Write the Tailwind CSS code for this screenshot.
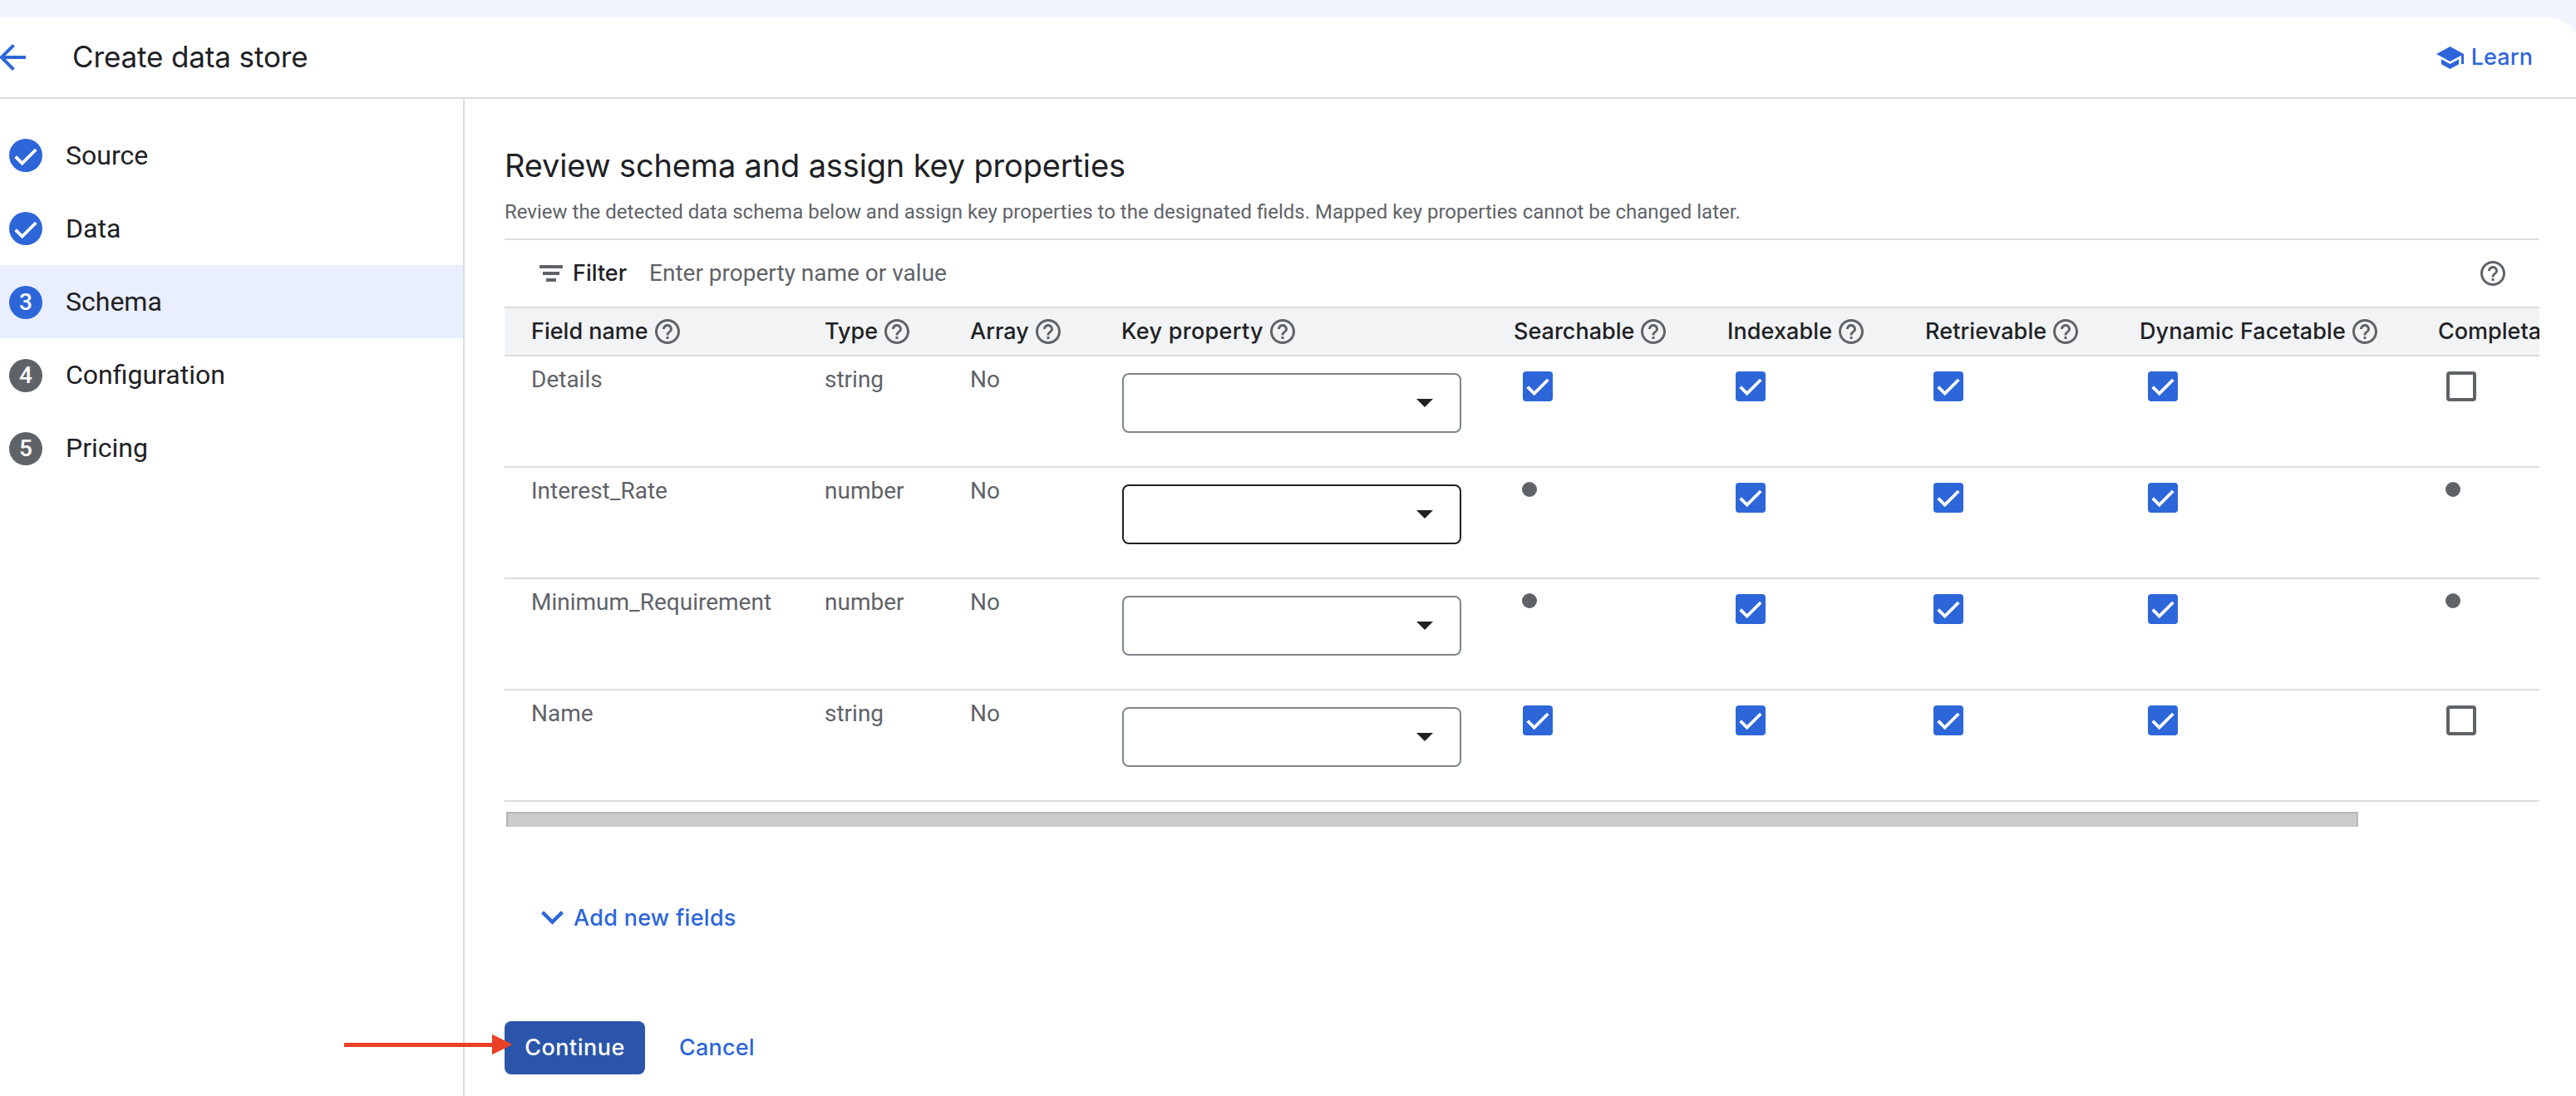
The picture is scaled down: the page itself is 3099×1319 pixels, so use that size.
<!DOCTYPE html>
<html lang="en">
<head>
  <meta charset="UTF-8">
  <meta name="viewport" content="width=device-width, initial-scale=1.0">
  <title>Create data store</title>
  <script src="https://cdn.jsdelivr.net/npm/@tailwindcss/browser@4"></script>
</head>
<body class="bg-[#f0f5fe] pt-[21px] h-[1319px] overflow-hidden font-['Roboto',sans-serif] text-[28px] text-[#5f6368]">
  <!-- Icons -->
  <svg class="hidden">
    <symbol id="help" viewBox="2 2 20 20"><path fill="currentColor" d="M11 18h2v-2h-2v2zm1-16C6.480 2 2 6.480 2 12s4.480 10 10 10 10-4.480 10-10S17.520 2 12 2zm0 18c-4.410 0-8-3.590-8-8s3.590-8 8-8 8 3.590 8 8-3.590 8-8 8zm0-14c-2.210 0-4 1.790-4 4h2c0-1.100.9-2 2-2s2 .9 2 2c0 2-3 1.750-3 5h2c0-2.250 3-2.500 3-5 0-2.210-1.790-4-4-4z"/></symbol>
    <symbol id="check" viewBox="0 0 36 36"><path fill="none" stroke="#fff" stroke-width="3.8" d="M5.700 18.600L13.700 26.600L30.300 10"/></symbol>
  </svg>

  <div class="w-[3104px] h-[1298px] bg-white rounded-tr-[40px]">
    <header class="h-[98px] border-b-2 border-[#dadce0] flex items-center font-['Inter',sans-serif]">
      <svg class="w-8 h-8 -ml-px text-[#2d66d9] shrink-0" viewBox="4 4 16 16"><path fill="currentColor" d="M20 11H7.830l5.590-5.590L12 4l-8 8 8 8 1.410-1.410L7.830 13H20v-2z"/></svg>
      <h1 class="ml-14 pb-0.5 text-[35px] text-[#202124] tracking-[-0.13px]">Create data store</h1>
      <a class="ml-auto mr-[57px] flex items-center text-[#2d66d9]">
        <svg class="w-[33px] h-[27px]" viewBox="1 3 22 18"><path fill="currentColor" d="M5 13.180v4L12 21l7-3.820v-4L12 17l-7-3.820zM12 3L1 9l11 6 9-4.910V17h2V9L12 3z"/></svg>
        <span class="ml-[9px] pt-px text-[27px] font-medium tracking-[0.1px]">Learn</span>
      </a>
    </header>

    <div class="flex h-[1200px]">
      <nav id="steps" class="w-[559px] shrink-0 border-r-2 border-[#dadce0] pt-6 text-[32px] text-[#202124]"></nav>

      <main class="w-[2496px] pl-12 pt-14">
        <h2 class="font-['Inter',sans-serif] text-[38px] leading-12 text-[#202124] tracking-[-0.16px]">Review schema and assign key properties</h2>
        <p class="mt-4 text-2xl leading-8">Review the detected data schema below and assign key properties to the designated fields. Mapped key properties cannot be changed later.</p>

        <div class="mt-4 h-[82px] border-t-2 border-[#dadce0] flex items-center pl-[42px] pr-[41px]">
          <svg class="w-7 h-5" viewBox="0 0 28 20" fill="currentColor"><path d="M0 0h28v4H0zM4 8h20v4H4zM8 16h12v4H8z"/></svg>
          <span class="ml-3 w-[92px] font-['Inter',sans-serif] text-[27px] font-medium text-[#202124]">Filter</span>
          <span>Enter property name or value</span>
          <svg class="w-[30px] h-[30px] ml-auto"><use href="#help"/></svg>
        </div>

        <div class="overflow-hidden">
          <div id="head" class="w-[2700px] h-[60px] grid grid-cols-[352px_175px_182px_473px_256px_238px_258px_359px_1fr] pl-8 border-y-2 border-[#dadce0] bg-[#f1f3f4] font-['Inter',sans-serif] text-[27px] font-medium text-[#202124]"></div>
          <div id="rows" class="w-[2700px]"></div>
        </div>
        <div class="mt-3 ml-0.5 w-[2228px] h-[18px] bg-[#cbcbcb] border-t-2 border-x-2 border-t-[#b3b5b3] border-l-[#b3b5b3] border-r-[#bcbcbc]"></div>

        <div class="mt-[92px] ml-11 h-9 flex items-center text-[#2d66d9] font-['Inter',sans-serif] text-[27px] font-medium">
          <svg class="w-[27px] h-[17px] mb-px" viewBox="6 8.590 12 7.410"><path fill="currentColor" d="M16.590 8.590L12 13.170 7.410 8.590 6 10l6 6 6-6z"/></svg>
          <span class="ml-[12px] tracking-[0.28px]">Add new fields</span>
        </div>

        <div class="mt-[106px] flex h-16 items-center font-['Inter',sans-serif] text-[27px] font-medium">
          <button class="w-[169px] h-16 rounded-lg bg-[#2b55ab] text-white tracking-[0.5px]">Continue</button>
          <button class="ml-[41px] text-[#2d66d9] tracking-[0.2px]">Cancel</button>
        </div>
      </main>
    </div>
  </div>

  <!-- Arrow pointing at Continue -->
  <svg class="absolute left-[414px] top-[1244px] w-[203px] h-[26px]" viewBox="0 0 203 26" fill="#ea4025"><path d="M0 11h178V.700L202.500 13 178 25.300V16H0z"/></svg>

  <script>
    const steps = ['Source', 'Data', 'Schema', 'Configuration', 'Pricing'];
    const current = 2;

    document.getElementById('steps').innerHTML = steps.map((name, i) => {
      const done = i < current;
      const color = i <= current ? 'bg-[#2d66d9]' : 'bg-[#5f6368]';
      const mark = done
        ? '<svg class="w-9 h-9 mt-0.5 -ml-px"><use href="#check"/></svg>'
        : i + 1;
      return `<div class="h-[88px] flex items-center pl-[11px] ${i === current ? 'bg-[#e9effe]' : ''}">
        <span class="w-10 h-10 rounded-full flex items-center justify-center text-[28px] font-medium text-white ${done ? '' : 'mt-0.5'} ${color}">${mark}</span>
        <span class="ml-7">${name}</span>
      </div>`;
    }).join('');

    const columns = [
      ['Field name', ''],
      ['Type', 'ml-px'],
      ['Array', 'ml-px'],
      ['Key property', 'ml-px tracking-[0.3px]'],
      ['Searchable', ''],
      ['Indexable', 'ml-px tracking-[0.1px]'],
      ['Retrievable', 'ml-px tracking-[0.1px]'],
      ['Dynamic Facetable', 'ml-px tracking-[0.1px]'],
      ['Completable', 'ml-px'],
    ];

    document.getElementById('head').innerHTML = columns.map(([name, extra]) => `
      <div class="flex items-center whitespace-nowrap">
        <span class="${extra}">${name}</span>
        <svg class="w-[30px] h-[30px] ml-2 shrink-0 text-[#5f6368]"><use href="#help"/></svg>
      </div>`).join('');

    // on = checked, off = unchecked, na = not available for the type
    const fields = [
      { name: 'Details', type: 'string', flags: ['on', 'on', 'on', 'on', 'off'] },
      { name: 'Interest_Rate', type: 'number', flags: ['na', 'on', 'on', 'on', 'na'], focus: true },
      { name: 'Minimum_Requirement', type: 'number', flags: ['na', 'on', 'on', 'on', 'na'] },
      { name: 'Name', type: 'string', flags: ['on', 'on', 'on', 'on', 'off'] },
    ];

    const flagHtml = {
      on: '<div class="mt-[18px] ml-[11px] w-9 h-9 rounded bg-[#2d66d9]"><svg class="w-9 h-9"><use href="#check"/></svg></div>',
      off: '<div class="mt-[18px] ml-[11px] w-9 h-9 rounded border-4 border-[#5f6368]"></div>',
      na: '<div class="mt-[17px] ml-[10px] w-[18px] h-[18px] rounded-full bg-[#5f6368]"></div>',
    };

    document.getElementById('rows').innerHTML = fields.map(f => `
      <div class="h-[134px] border-b-2 border-[#dadce0] grid grid-cols-[352px_175px_182px_473px_256px_238px_258px_359px_1fr] pl-8 leading-9">
        <div class="pt-2.5">${f.name}</div>
        <div class="pt-2.5 pl-px">${f.type}</div>
        <div class="pt-2.5 pl-px">No</div>
        <div class="mt-5 ml-0.5 w-[408px] h-[72px] rounded-lg border-2 flex items-center justify-end pr-8 ${f.focus ? 'border-[#202124]' : 'border-[#80868b]'}">
          <svg class="w-5 h-2.5 text-[#202124]" viewBox="0 0 20 10"><path fill="currentColor" d="M0 0h20L10 10z"/></svg>
        </div>
        ${f.flags.map(v => `<div>${flagHtml[v]}</div>`).join('')}
      </div>`).join('');
  </script>
</body>
</html>
